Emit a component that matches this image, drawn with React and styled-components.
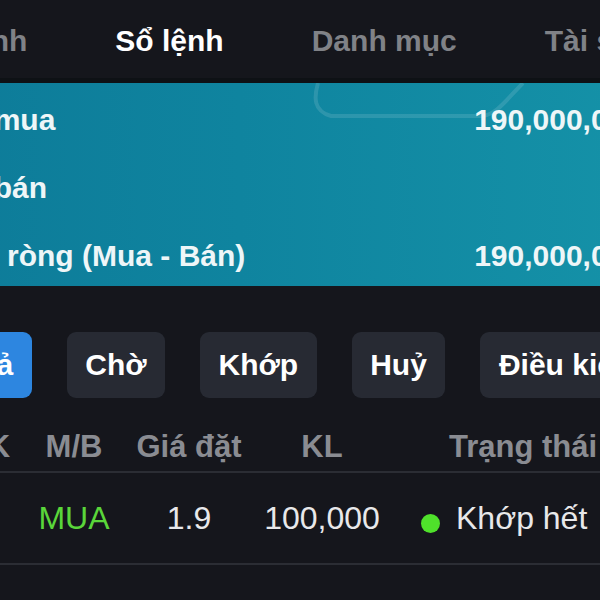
import React from "react";
import styled, { createGlobalStyle } from "styled-components";

const Global = createGlobalStyle`
  html, body { margin: 0; padding: 0; background: #15161c; }
  body { font-family: "Liberation Sans", Arial, sans-serif; }
`;

const Screen = styled.div`
  width: 600px;
  height: 600px;
  overflow: hidden;
  background: #15161c;
  display: flex;
  flex-direction: column;
`;

const TabBar = styled.div`
  height: 83px;
  box-sizing: border-box;
  padding-top: 3px;
  flex: none;
  display: flex;
  align-items: center;
  gap: 88px;
  margin-left: -91px;
  white-space: nowrap;
  border-bottom: 5px solid #0e1115;
`;

const Tab = styled.div`
  font-size: 30px;
  font-weight: 700;
  color: ${(p) => (p.$active ? "#ffffff" : "#808287")};
`;

const Card = styled.div`
  position: relative;
  flex: none;
  width: 747px;
  height: 203px;
  margin-left: -97px;
  box-sizing: border-box;
  padding: 0 9px 0 9px;
  border-radius: 14px;
  background: linear-gradient(90deg, #0d7a98 0%, #0f849f 45%, #1592a8 100%);
  display: grid;
  grid-template-rows: repeat(3, 1fr);
  overflow: hidden;
`;

const Decor = styled.svg`
  position: absolute;
  left: 0;
  top: 0;
  pointer-events: none;
`;

const CardRow = styled.div`
  position: relative;
  display: flex;
  align-items: center;
  justify-content: space-between;
  padding-top: 7px;
  font-size: 30px;
  font-weight: 700;
  color: #eef6f8;
  white-space: nowrap;
`;

const Filters = styled.div`
  flex: none;
  display: flex;
  gap: 35px;
  margin: 46px 0 0 -92px;
  white-space: nowrap;
`;

const Chip = styled.div`
  height: 66px;
  padding: 0 18.5px;
  display: flex;
  align-items: center;
  border-radius: 9px;
  font-size: 30px;
  font-weight: 700;
  color: #ffffff;
  background: ${(p) => (p.$active ? "#2d86e0" : "#272a33")};
`;

const Grid = styled.div`
  flex: none;
  display: grid;
  grid-template-columns: 136px 88px 142px 124px 278px;
  margin-left: -106px;
  height: ${(p) => p.$h}px;
  padding-top: ${(p) => p.$pt || 0}px;
  box-sizing: content-box;
  border-bottom: 2px solid #2b2d34;
  white-space: nowrap;
`;

const Cell = styled.div`
  display: flex;
  align-items: center;
  justify-content: ${(p) => (p.$start ? "flex-start" : "center")};
  padding-left: ${(p) => p.$pl || 0}px;
  gap: 16px;
  font-size: ${(p) => (p.$head ? 31 : 32)}px;
  font-weight: ${(p) => (p.$head ? 700 : 400)};
  color: ${(p) => p.$color || (p.$head ? "#8a8c92" : "#e8e8ea")};
`;

const Dot = styled.span`
  width: 19px;
  height: 19px;
  border-radius: 50%;
  background: #4fe12b;
  margin-top: 11px;
  flex: none;
`;

export default function App() {
  return (
    <>
      <Global />
      <Screen>
        <TabBar>
          <Tab>Đặt lệnh</Tab>
          <Tab $active>Sổ lệnh</Tab>
          <Tab>Danh mục</Tab>
          <Tab>Tài sản</Tab>
        </TabBar>
        <Card>
          <Decor width="747" height="203" viewBox="0 0 747 203">
            <path
              d="M415 0 C411 14, 410 28, 428 33 L580 33 C594 31, 604 16, 620 0"
              fill="none"
              stroke="rgba(255,255,255,0.12)"
              strokeWidth="4"
            />
          </Decor>
          <CardRow>
            <span>Tổng mua</span>
            <span>190,000,000</span>
          </CardRow>
          <CardRow>
            <span>Tổng bán</span>
            <span>0</span>
          </CardRow>
          <CardRow>
            <span>Giá trị ròng (Mua - Bán)</span>
            <span>190,000,000</span>
          </CardRow>
        </Card>
        <Filters>
          <Chip $active>Tất cả</Chip>
          <Chip>Chờ</Chip>
          <Chip>Khớp</Chip>
          <Chip>Huỷ</Chip>
          <Chip>Điều kiện</Chip>
        </Filters>
        <Grid $h={49} $pt={24}>
          <Cell $head>Mã CK</Cell>
          <Cell $head>M/B</Cell>
          <Cell $head>Giá đặt</Cell>
          <Cell $head>KL</Cell>
          <Cell $head>Trạng thái</Cell>
        </Grid>
        <Grid $h={90}>
          <Cell>HPG</Cell>
          <Cell $color="#5ad63a">MUA</Cell>
          <Cell>1.9</Cell>
          <Cell>100,000</Cell>
          <Cell $start $pl={37}>
            <Dot />
            Khớp hết
          </Cell>
        </Grid>
      </Screen>
    </>
  );
}
